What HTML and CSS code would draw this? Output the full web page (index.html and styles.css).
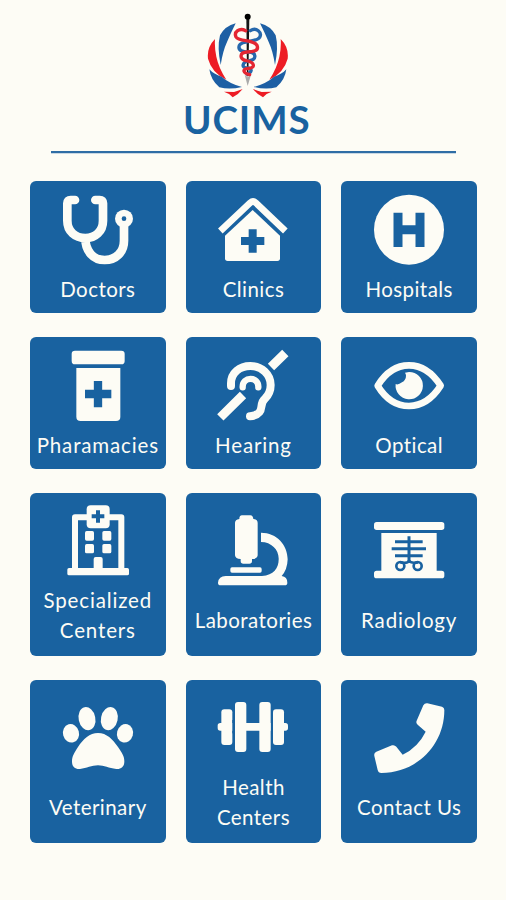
FILE: index.html
```html
<!DOCTYPE html>
<html lang="en">
<head>
<meta charset="utf-8">
<title>UCIMS</title>
<link rel="stylesheet" href="styles.css">
</head>
<body>
<header class="header">
  <svg class="logo" viewBox="110 25 245 255" aria-hidden="true">
    <g class="wing">
      <path class="blue" d="M196 56Q164 64 149 92Q140 128 151 181Q157 140 170 112Q180 88 196 56Z"/>
      <path class="red" d="M134 103Q109 128 113 162Q124 204 168 225Q145 190 138 156Q132 128 134 103Z"/>
      <path class="blue" d="M117 194Q121 226 147 248Q178 256 215 247Q176 236 154 216Q130 209 117 194Z"/>
      <path class="red" d="M161 261Q176 261 191 262Q205 258 217 253Q205 269 187 278Q176 265 161 261Z"/>
    </g>
    <g class="wing" transform="translate(465 0) scale(-1 1)">
      <path class="blue" d="M196 56Q164 64 149 92Q140 128 151 181Q157 140 170 112Q180 88 196 56Z"/>
      <path class="red" d="M134 103Q109 128 113 162Q124 204 168 225Q145 190 138 156Q132 128 134 103Z"/>
      <path class="blue" d="M117 194Q121 226 147 248Q178 256 215 247Q176 236 154 216Q130 209 117 194Z"/>
      <path class="red" d="M161 261Q176 261 191 262Q205 258 217 253Q205 269 187 278Q176 265 161 261Z"/>
    </g>
    <path class="rod" d="M228 40H237L234 215H230Z"/>
    <path class="tip" d="M223 210L232 244L242 210L232 218Z"/>
    <g class="snake">
      <path class="blue-line" d="M240 78C258 66 276 84 268 98C260 114 214 106 207 122C201 138 220 143 236 142C258 143 260 164 238 168C216 171 210 190 232 190C248 191 244 204 230 208"/>
      <path class="red-line" d="M226 78C207 68 190 82 197 97C206 112 250 104 260 122C267 139 247 142 230 142C207 143 206 163 228 168C254 173 256 190 234 191C214 193 218 205 238 210"/>
    </g>
    <circle cx="232" cy="36" r="9"/>
  </svg>
  <h1 class="brand">UCIMS</h1>
</header>
<main class="grid">
  <a class="card">
    <svg class="icon" viewBox="113 60 210 210"><path class="line" stroke-width="26" d="M149 75H136Q126 75 126 85V137C126 169 150 189 180 189S233 169 233 137V85Q233 75 223 75H210M180 190C180 229 204 255 238 255S296 231 296 197V145"/><circle cx="296" cy="131" r="27"/><circle class="hole" cx="296" cy="131" r="7"/></svg>
    <span class="label">Doctors</span>
  </a>
  <a class="card">
    <svg class="icon" viewBox="115 60 210 210"><path class="line butt" stroke-width="20" d="M122 168L212 83Q220 76 228 83L317 168"/><path d="M136 182L219 105L301 182V250Q301 258 293 258H144Q136 258 136 250Z"/><path class="cut" stroke-width="24" d="M219 163V233M184 198H254"/></svg>
    <span class="label">Clinics</span>
  </a>
  <a class="card">
    <svg class="icon" viewBox="118 60 210 210"><circle cx="223" cy="164" r="105"/><path class="cut" stroke-width="27" d="M190 113V216M256 113V216M190 164H256"/></svg>
    <span class="label">Hospitals</span>
  </a>
  <a class="card">
    <svg class="icon" viewBox="113 61 210 210"><rect x="139" y="60" width="159" height="41" rx="10"/><path d="M153 112H285V258Q285 271 272 271H166Q153 271 153 258Z"/><path class="cut" stroke-width="25" d="M218 151V230M179 190H258"/></svg>
    <span class="label wide">Pharamacies</span>
  </a>
  <a class="card">
    <svg class="icon" viewBox="115 61 210 210"><path class="line" stroke-width="24" d="M154 166V158C154 126 180 106 212 106C247 106 273 132 273 163C273 184 266 194 256 204C240 217 250 233 239 245Q230 256 211 257"/><path class="line" stroke-width="19" d="M189 170C187 136 238 136 236 170"/><path class="line butt" stroke-width="27" d="M122 260L190 193M274 109L317 67"/></svg>
    <span class="label wide">Hearing</span>
  </a>
  <a class="card">
    <svg class="icon" viewBox="118 61 210 210"><path class="line" stroke-width="20" d="M129 165C151 129 184 104 223 104S295 129 318 165C295 201 262 226 223 226S151 201 129 165Z"/><path d="M223 124A41 41 0 1 1 183 160Q190 164 202 155Q214 148 214 135Q214 130 211 126Z"/></svg>
    <span class="label">Optical</span>
  </a>
  <a class="card tall">
    <svg class="icon" viewBox="113 54 210 210"><path class="line" stroke-width="18" d="M149 247V91H288V247"/><rect x="126" y="243" width="185" height="22" rx="5"/><rect x="184" y="55" width="69" height="69" rx="12"/><rect x="179" y="132" width="27" height="29" rx="5"/><rect x="231" y="132" width="27" height="29" rx="5"/><rect x="179" y="171" width="27" height="28" rx="5"/><rect x="231" y="171" width="27" height="28" rx="5"/><rect x="205" y="210" width="27" height="40" rx="6"/><path class="cut" stroke-width="12" d="M218 70V107M199 88H237"/></svg>
    <span class="label wide two">Specialized Centers</span>
  </a>
  <a class="card roomy">
    <svg class="icon" viewBox="115 83 210 210"><path d="M187 84H212Q220 85 221 95Q234 96 234 107V204Q233 215 217 215V221Q217 229 209 229H191Q183 229 183 221V215Q167 215 166 204V107Q166 97 179 95Q179 84 187 84Z"/><rect x="152" y="240" width="94" height="16" rx="5"/><path d="M244 136C292 136 324 174 324 216Q323 247 306 266Q323 268 323 286Q323 294 315 294H123Q115 294 115 286Q117 266 138 266H247C283 263 298 242 297 213C297 187 275 164 244 164Z"/></svg>
    <span class="label">Laboratories</span>
  </a>
  <a class="card roomy">
    <svg class="icon" viewBox="118 83 210 210"><rect x="118" y="104" width="211" height="24" rx="8"/><path d="M140 137H306V250H321Q329 250 329 258V265Q329 273 321 273H126Q118 273 118 265V258Q118 250 126 250H140Z"/><path class="cut" stroke-width="9" d="M223 147V224M181 163H264M171 184H274M181 205H264"/><path class="cut" stroke-width="8" d="M223 220Q219 229 197 225M223 220Q228 229 250 225"/><circle class="cut" stroke-width="8" cx="197" cy="236" r="12"/><circle class="cut" stroke-width="8" cx="249" cy="236" r="12"/></svg>
    <span class="label wide">Radiology</span>
  </a>
  <a class="card roomy">
    <svg class="icon" viewBox="113 81 210 210"><ellipse cx="137" cy="175" rx="24" ry="28" transform="rotate(-15 137 175)"/><ellipse cx="185" cy="131" rx="25" ry="35" transform="rotate(-12 185 131)"/><ellipse cx="252" cy="131" rx="25" ry="35" transform="rotate(12 252 131)"/><ellipse cx="299" cy="175" rx="24" ry="28" transform="rotate(15 299 175)"/><path d="M218 174C244 174 262 193 278 216C291 235 297 244 297 259C297 276 287 283 273 282C250 280 237 271 218 271S184 280 164 282C149 283 140 276 140 259C140 244 147 233 158 216C174 192 193 174 218 174Z"/></svg>
    <span class="label">Veterinary</span>
  </a>
  <a class="card tall">
    <svg class="icon" viewBox="115 51 210 210"><rect x="114" y="144" width="211" height="23" rx="8"/><rect x="125" y="103" width="33" height="107" rx="9"/><rect class="hole" x="158" y="135" width="8" height="40"/><rect class="hole" x="273" y="135" width="7" height="40"/><rect x="166" y="81" width="34" height="150" rx="9"/><rect x="239" y="81" width="34" height="150" rx="9"/><rect x="280" y="103" width="33" height="107" rx="9"/></svg>
    <span class="label two">Health Centers</span>
  </a>
  <a class="card roomy">
    <svg class="icon" viewBox="583 81 210 210"><path d="M743 85L787 95Q794 97 794 105C794 211 710 294 605 294Q596 294 594 285L584 243Q582 234 590 230L637 211Q645 209 650 215L669 239Q715 217 738 170L714 149Q708 144 711 137L731 91Q735 84 743 85Z"/></svg>
    <span class="label">Contact Us</span>
  </a>
</main>
</body>
</html>
```
FILE: styles.css
```css
:root { --blue: #1962a0; --paper: #fdfcf5; }
* { box-sizing: border-box; }
body {
  margin: 0;
  min-height: 900px;
  background: var(--paper);
  font-family: Lato, "Liberation Sans", sans-serif;
}
.header {
  width: 405px;
  height: 153px;
  margin-left: 51px;
  padding-top: 13px;
  border-bottom: 2px solid #2f6da5;
  box-shadow: 0 1px 0 #c9d8e3;
}
.logo { display: block; width: 81.7px; height: 85px; margin-left: 155.7px; }
.brand {
  width: max-content;
  margin: 1px 0 0 132px;
  color: var(--blue);
  font-size: 38.5px;
  font-weight: 700;
  line-height: 40px;
  letter-spacing: 0.9px;
}
.wing .blue { fill: #1d5fa4; }
.wing .red { fill: #ed1c24; }
.rod { fill: #151515; }
.tip { fill: #aaa; }
.snake { fill: none; stroke-width: 10; stroke-linecap: round; }
.blue-line { stroke: #2668ac; }
.red-line { stroke: #e42632; }
.grid {
  display: grid;
  grid-template-columns: repeat(3, 1fr);
  grid-template-rows: 132px 132px 163px 163px;
  gap: 24px 20px;
  width: 447px;
  margin: 28px 0 0 30px;
}
.card {
  display: flex;
  flex-direction: column;
  align-items: center;
  padding: 2px 0 9px;
  border-radius: 6px;
  background: var(--blue);
  color: var(--paper);
}
.tall { padding-bottom: 11px; }
.roomy { padding-bottom: 21px; }
.icon { width: 70px; height: 70px; margin: auto 0; fill: var(--paper); overflow: visible; }
.card:nth-child(-n + 6) .icon { position: relative; top: 1px; }
.line { fill: none; stroke: var(--paper); stroke-linecap: round; stroke-linejoin: round; }
.butt { stroke-linecap: butt; }
.cut { fill: none; stroke: var(--blue); }
.hole { fill: var(--blue); }
.label {
  font-size: 20.5px;
  line-height: 30px;
  letter-spacing: 0.45px;
  text-align: center;
  white-space: nowrap;
}
.wide { letter-spacing: 0.85px; }
.two { width: 125px; white-space: normal; }
```
